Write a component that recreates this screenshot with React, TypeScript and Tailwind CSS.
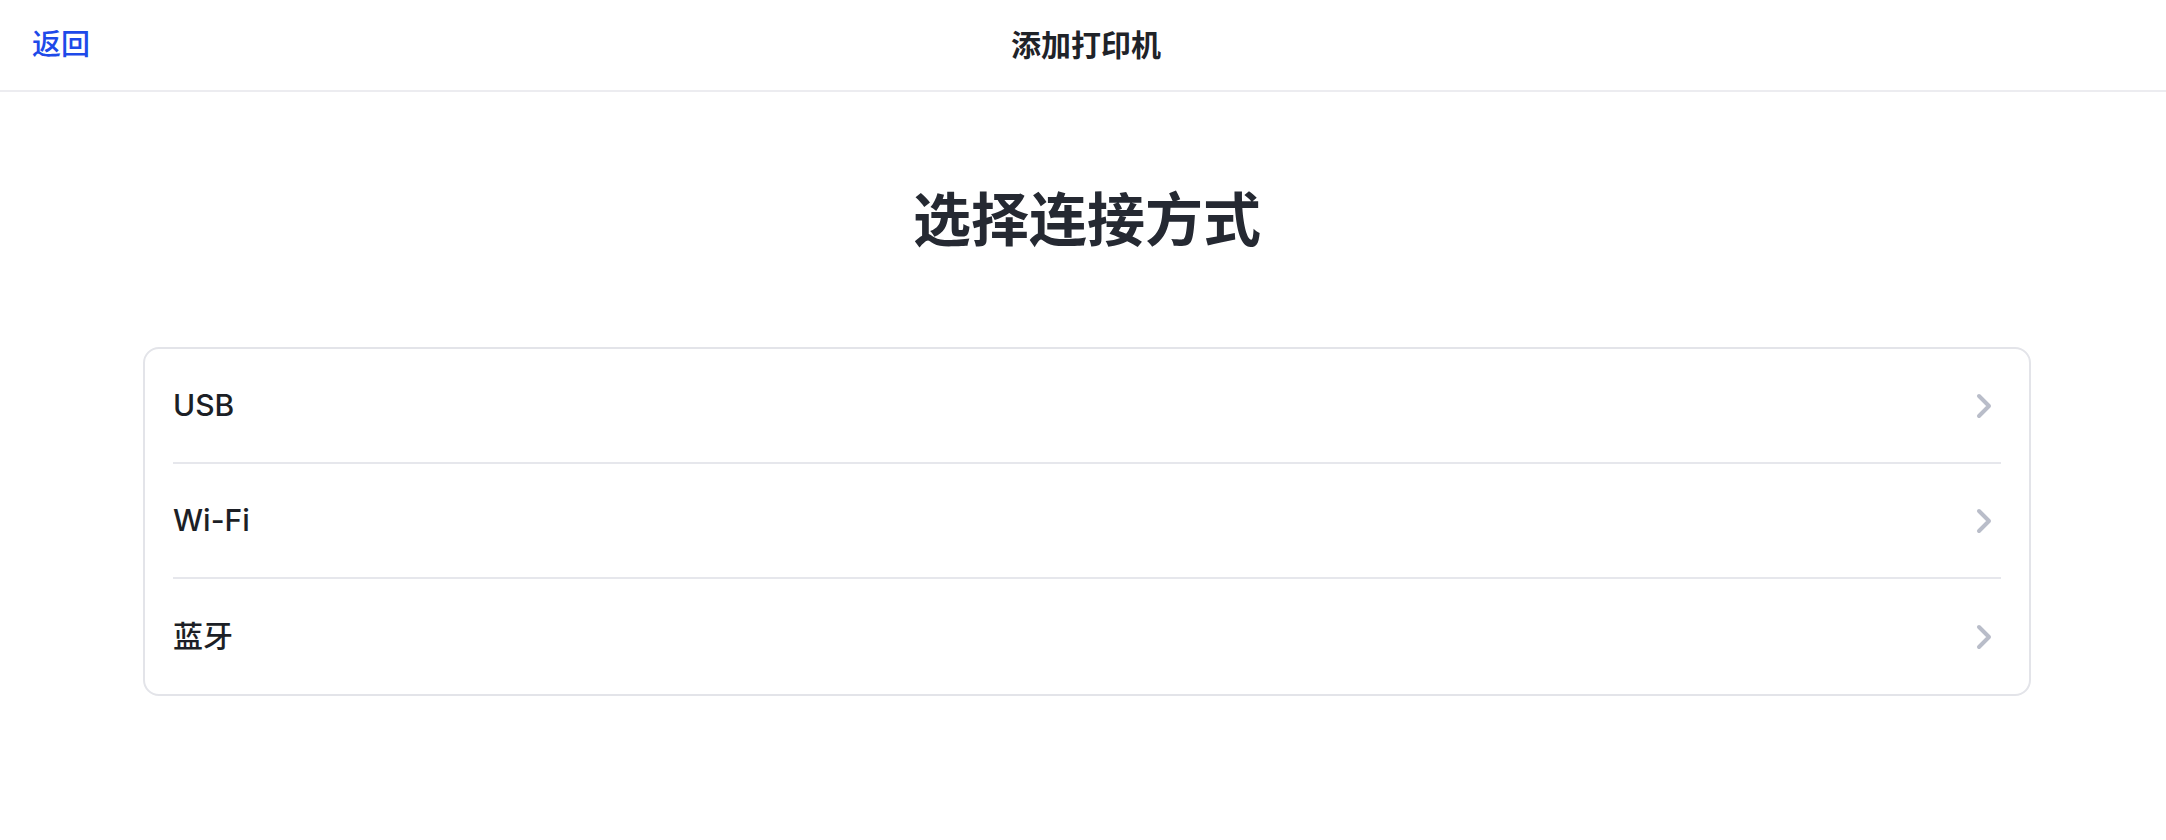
const FONT = 'font-["Inter","Noto_Sans_CJK_SC",sans-serif]'

const METHODS = ['USB', 'Wi-Fi', '蓝牙'] as const

function Chevron() {
  return (
    <svg width="16" height="26" viewBox="0 0 16 26" fill="none" stroke="#b9bdc9" strokeWidth="4" strokeLinecap="round" strokeLinejoin="round">
      <path d="M3 3l10 10-10 10" />
    </svg>
  )
}

function Header() {
  return (
    <header className="grid h-[92px] grid-cols-3 items-center border-b-2 border-[#ececf0] pr-[26px] pl-[32px]">
      <button type="button" className="justify-self-start text-[29px] font-medium text-[#1e4ae9]">
        返回
      </button>
      <h1 className="justify-self-center text-[30px] font-semibold text-[#1f2329]">添加打印机</h1>
      <div />
    </header>
  )
}

export default function App() {
  return (
    <div className={`${FONT} min-h-[840px] bg-white`}>
      <Header />
      <main className="flex flex-col items-center pl-[8px]">
        <h2 className="mt-[92px] text-[58px] leading-[72px] font-bold text-[#252932]">选择连接方式</h2>
        <ul className="mt-[91px] w-[1888px] divide-y-2 divide-[#e6e7ec] rounded-[16px] border-2 border-[#e3e4e9] px-[28px]">
          {METHODS.map((m) => (
            <li key={m} className="flex h-[115px] items-center justify-between">
              <span className="text-[30px] font-medium text-[#1c1f26]">{m}</span>
              <span className="mr-[9px]">
                <Chevron />
              </span>
            </li>
          ))}
        </ul>
      </main>
    </div>
  )
}
